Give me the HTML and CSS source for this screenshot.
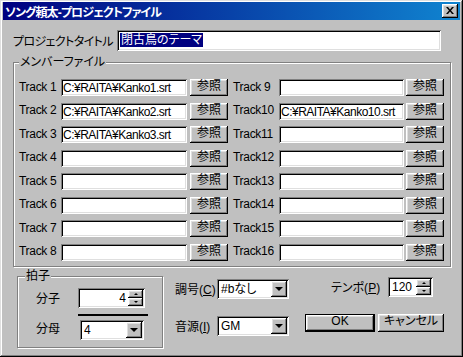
FILE: index.html
```html
<!DOCTYPE html>
<html lang="ja">
  <head>
    <meta charset="UTF-8" />
    <title>ソング頼太-プロジェクトファイル</title>
    <link rel="stylesheet" href="styles.css">
  </head>
  <body>
    <div class="window">
      <div class="titlebar">
        <span class="title">ソング頼太-プロジェクトファイル</span>
        <button class="close" aria-label="閉じる">
          <svg width="8" height="7" viewBox="0 0 8 7">
            <path d="M0 0h2l2 2.5L6 0h2L5 3.5 8 7H6L4 4.5 2 7H0l3-3.5z" fill="#000" />
          </svg>
        </button>
      </div>
      <div class="dialog">
        <div class="title-row">
          <label>プロジェクトタイトル</label>
          <div class="field title-field"><span class="selected">閉古鳥のテーマ</span></div>
        </div>

        <fieldset class="group members">
          <legend>メンバーファイル</legend>
          <div class="tracks">
            <div class="track-col left">
              <div class="track"><label>Track 1</label><input type="text" value="C:¥RAITA¥Kanko1.srt"><button>参照</button></div>
              <div class="track"><label>Track 2</label><input type="text" value="C:¥RAITA¥Kanko2.srt"><button>参照</button></div>
              <div class="track"><label>Track 3</label><input type="text" value="C:¥RAITA¥Kanko3.srt"><button>参照</button></div>
              <div class="track"><label>Track 4</label><input type="text" value=""><button>参照</button></div>
              <div class="track"><label>Track 5</label><input type="text" value=""><button>参照</button></div>
              <div class="track"><label>Track 6</label><input type="text" value=""><button>参照</button></div>
              <div class="track"><label>Track 7</label><input type="text" value=""><button>参照</button></div>
              <div class="track"><label>Track 8</label><input type="text" value=""><button>参照</button></div>
            </div>
            <div class="track-col right">
              <div class="track"><label>Track 9</label><input type="text" value=""><button>参照</button></div>
              <div class="track"><label>Track10</label><input type="text" value="C:¥RAITA¥Kanko10.srt"><button>参照</button></div>
              <div class="track"><label>Track11</label><input type="text" value=""><button>参照</button></div>
              <div class="track"><label>Track12</label><input type="text" value=""><button>参照</button></div>
              <div class="track"><label>Track13</label><input type="text" value=""><button>参照</button></div>
              <div class="track"><label>Track14</label><input type="text" value=""><button>参照</button></div>
              <div class="track"><label>Track15</label><input type="text" value=""><button>参照</button></div>
              <div class="track"><label>Track16</label><input type="text" value=""><button>参照</button></div>
            </div>
          </div>
        </fieldset>

        <div class="bottom">
          <fieldset class="group meter">
            <legend>拍子</legend>
            <div class="meter-grid">
              <label>分子</label>
              <div class="field spin numerator">
                <span class="value">4</span>
                <span class="spin-btns"><span class="up"></span><span class="down"></span></span>
              </div>
              <div class="fraction-line"></div>
              <label>分母</label>
              <div class="field combo denominator">
                <span class="value">4</span>
                <span class="drop"></span>
              </div>
            </div>
          </fieldset>

          <div class="keys">
            <label>調号(<u>C</u>)</label>
            <div class="field combo">
              <span class="value">#bなし</span>
              <span class="drop"></span>
            </div>
            <label>音源(<u>I</u>)</label>
            <div class="field combo">
              <span class="value">GM</span>
              <span class="drop"></span>
            </div>
          </div>

          <div class="actions">
            <div class="tempo">
              <label>テンポ(<u>P</u>)</label>
              <div class="field spin tempo-spin">
                <span class="value">120</span>
                <span class="spin-btns"><span class="up"></span><span class="down"></span></span>
              </div>
            </div>
            <div class="buttons">
              <button class="ok">OK</button>
              <button class="cancel">キャンセル</button>
            </div>
          </div>
        </div>
      </div>
    </div>
  </body>
</html>
```

FILE: styles.css
```css
html,
body {
  margin: 0;
  padding: 0;
}
body {
  font-family: "Liberation Sans", "Noto Sans CJK JP", sans-serif;
  font-size: 12px;
  font-feature-settings: "palt";
  color: #000;
  background-color: #c0c0c0;
}
label {
  white-space: nowrap;
  flex-shrink: 0;
}
.window {
  width: 463px;
  height: 357px;
  box-sizing: border-box;
  padding: 2px 3px 3px;
  background-color: #c0c0c0;
  box-shadow: inset -1px -1px #000, inset 1px 1px #dfdfdf,
    inset -2px -2px #808080, inset 2px 2px #fff;
}
.titlebar {
  height: 18px;
  display: flex;
  align-items: center;
  justify-content: space-between;
  padding: 0 2px;
  background: linear-gradient(to right, #000080, #1084d0);
  color: #fff;
}
.title {
  font-weight: bold;
  letter-spacing: -0.9px;
  white-space: nowrap;
}
button {
  font-family: inherit;
  font-size: 12px;
  line-height: 13px;
  font-feature-settings: "palt";
  color: #000;
  background-color: #c0c0c0;
  border: none;
  padding: 0 0 2px;
  margin: 0;
  box-shadow: inset -1px -1px #000, inset 1px 1px #fff,
    inset -2px -2px #808080, inset 2px 2px #dfdfdf;
}
.close {
  width: 16px;
  height: 14px;
  display: flex;
  align-items: center;
  justify-content: center;
  padding: 0 1px 1px 0;
}
.close svg {
  display: block;
}
.dialog {
  padding: 10px 0 0 10px;
}
.field {
  box-sizing: border-box;
  background-color: #fff;
  box-shadow: inset 1px 1px #808080, inset -1px -1px #fff,
    inset 2px 2px #000, inset -2px -2px #dfdfdf;
}
.title-row {
  display: flex;
  align-items: center;
  height: 21px;
}
.title-row label {
  width: 104px;
  letter-spacing: -0.6px;
}
.title-field {
  width: 324px;
  height: 21px;
  padding: 3px 3px;
  line-height: 15px;
}
.selected {
  background-color: #000080;
  color: #fff;
  padding: 0 1px;
}
.group {
  margin: 0;
  box-sizing: border-box;
  border: 1px solid #808080;
  box-shadow: inset 1px 1px #fff, 1px 1px #fff;
}
.group legend {
  padding: 0 1px;
  line-height: 15px;
  background-color: #c0c0c0;
}
.members {
  margin-top: 4px;
  width: 438px;
  padding: 9px 5px 5px;
}
.tracks {
  display: flex;
  gap: 5px;
}
.track-col {
  display: flex;
  flex-direction: column;
  gap: 6.5px;
}
.track {
  display: flex;
  align-items: center;
  height: 17px;
}
.track label {
  width: 42px;
  letter-spacing: -0.3px;
  margin-top: -2px;
}
.right .track label {
  width: 46px;
}
.track input {
  width: 126px;
  height: 17px;
  box-sizing: border-box;
  border: none;
  outline: none;
  padding: 1px 2px 0;
  margin: 0;
  font-family: inherit;
  font-size: 12px;
  letter-spacing: -0.5px;
  background-color: #fff;
  box-shadow: inset 1px 1px #808080, inset -1px -1px #fff,
    inset 2px 2px #000, inset -2px -2px #dfdfdf;
}
.right .track input {
  width: 125px;
}
.track button {
  width: 38px;
  height: 17px;
  margin-left: 3px;
}
.right .track button {
  margin-left: 2px;
}
.bottom {
  display: flex;
  align-items: flex-start;
}
.meter {
  margin: 2px 0 0 4px;
  width: 146px;
  padding: 4px 0 7px 7px;
}
.meter-grid {
  display: grid;
  grid-template-columns: 42px 70px;
  align-items: center;
  margin-left: 11px;
}
.fraction-line {
  grid-column: 2;
  height: 2px;
  margin-top: 6px;
  background-color: #000;
}
.denominator {
  margin: 4px 0 0 2px;
  width: 64px;
}
.spin,
.combo {
  display: flex;
  align-items: center;
  height: 20px;
  padding: 2px;
}
.value {
  flex: 1;
  padding: 0 2px;
  line-height: 16px;
}
.numerator {
  width: 67px;
}
.numerator .value {
  text-align: right;
}
.spin-btns {
  display: flex;
  flex-direction: column;
  width: 15px;
  height: 16px;
}
.spin-btns span {
  flex: 1;
  display: flex;
  align-items: center;
  justify-content: center;
  box-shadow: inset -1px -1px #000, inset 1px 1px #fff,
    inset -2px -2px #808080, inset 2px 2px #dfdfdf;
  background-color: #c0c0c0;
}
.spin-btns span::after {
  content: "";
  border-left: 2px solid transparent;
  border-right: 2px solid transparent;
}
.spin-btns .up::after {
  border-bottom: 2px solid #000;
}
.spin-btns .down::after {
  border-top: 2px solid #000;
}
.drop {
  width: 16px;
  height: 16px;
  display: flex;
  align-items: center;
  justify-content: center;
  background-color: #c0c0c0;
  box-shadow: inset -1px -1px #000, inset 1px 1px #fff,
    inset -2px -2px #808080, inset 2px 2px #dfdfdf;
}
.drop::after {
  content: "";
  border-left: 4px solid transparent;
  border-right: 4px solid transparent;
  border-top: 4px solid #000;
  margin-top: 1px;
}
.keys {
  display: grid;
  grid-template-columns: 42px 72px;
  align-items: center;
  row-gap: 17px;
  margin: 12px 0 0 12px;
}
.actions {
  margin: 10px 0 0 16px;
  width: 139px;
}
.tempo {
  display: flex;
  align-items: center;
  padding-left: 26px;
}
.tempo label {
  width: 57px;
}
.tempo-spin {
  width: 45px;
}
.buttons {
  display: flex;
  margin-top: 17px;
}
.buttons button {
  height: 18px;
}
.ok {
  width: 70px;
  outline: 1px solid #000;
  outline-offset: -1px;
  box-shadow: inset -2px -2px #000, inset 2px 2px #fff,
    inset -3px -3px #808080, inset 3px 3px #dfdfdf;
}
.cancel {
  width: 66px;
  margin-left: 3px;
}
```
